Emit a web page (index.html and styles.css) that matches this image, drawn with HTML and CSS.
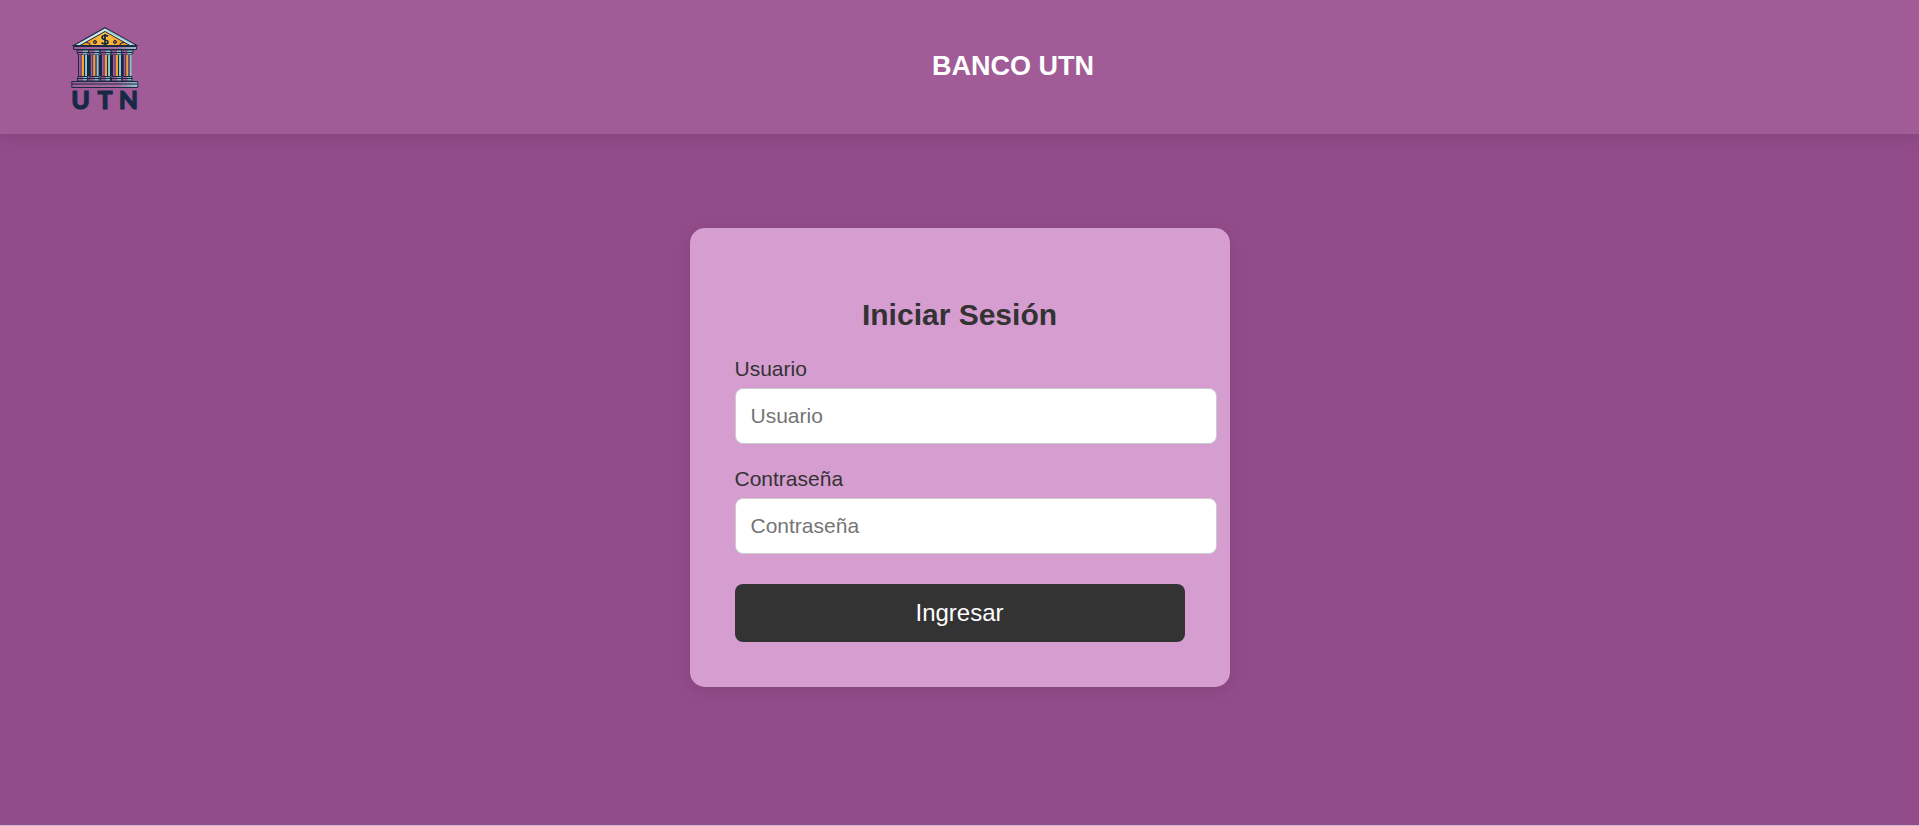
FILE: index.html
```html
<!DOCTYPE html>
<html lang="es">
<head>
<meta charset="utf-8">
<title>Banco UTN</title>
<link rel="stylesheet" href="styles.css">
</head>
<body>
<header class="header">
  <svg class="logo" viewBox="0 0 72 92" role="img" aria-label="UTN">
    <defs>
      <linearGradient id="gold" x1="0" x2="1"><stop offset="0" stop-color="#ef8d18"/><stop offset=".5" stop-color="#ffc246"/><stop offset="1" stop-color="#f18a0c"/></linearGradient>
      <linearGradient id="stone" x1="0" x2="1"><stop offset="0" stop-color="#a15c97"/><stop offset=".7" stop-color="#a66da0"/><stop offset="1" stop-color="#8fc5cc"/></linearGradient>
      <g id="column">
        <path d="M0 23h12v3l-1.500 2h-9L0 26z" fill="#a15c97"/>
        <path d="M6 23h5v5H6z" fill="#83b9c0"/>
        <path d="M0 23h11.500v2.500L10 28H1.500L0 25.500zM0 25.500h11" fill="none" stroke="#1b2945"/>
        <path d="M2 28h8v21H2z" fill="#a15c97"/>
        <path d="M4 28v21" stroke="#633e62"/>
        <path d="M6 28v21" stroke="#f3a52c" stroke-width="2"/>
        <path d="M9 28v21" stroke="#8bc5ce" stroke-width="2"/>
        <path d="M1.500 28v21M7.500 28v21" stroke="#1b2945"/>
        <path d="M1 49h10v5H0v-3z" fill="#a15c97"/>
        <path d="M6 49h5v5H6z" fill="#83b9c0"/>
        <path d="M1 49.500h9.500V54H.5v-2.500zM0 51.500h11" fill="none" stroke="#1b2945"/>
      </g>
    </defs>
    <path d="M14 28h42v21H14z" fill="#17263f"/>
    <path d="M2.500 18.500 34 .8l31.500 17.700z" fill="#d3e5e2" stroke="#1b2945" stroke-width="1.200"/>
    <path d="M9 18.500 34 4.500l25 14z" fill="url(#gold)" stroke="#1b2945"/>
    <path d="M35 2.500 63 18" stroke="#8fc5cc" stroke-width="1.200"/>
    <path d="M15 15.500c3 0 4 1 4 3M53 15.500c-3 0-4 1-4 3" fill="none" stroke="#1b2945" stroke-width="1.200"/>
    <circle cx="24" cy="15" r="1.500" fill="#8a6a3e" stroke="#1b2945"/>
    <circle cx="44" cy="15" r="1.500" fill="#8a6a3e" stroke="#1b2945"/>
    <path d="M37 9.500c-1-1.500-6-1.500-6 1 0 2.500 6 2 6 4.500 0 2.500-5 2.500-6.500.5M34 7v11" fill="none" stroke="#17263f" stroke-width="1.700"/>
    <path d="M2.500 19.500h63v3h-63z" fill="url(#stone)" stroke="#1b2945"/>
    <use href="#column" x="6"/><use href="#column" x="17.500"/><use href="#column" x="29"/><use href="#column" x="40"/><use href="#column" x="50.500"/>
    <path d="M.8 54.500h66v6h-66z" fill="url(#stone)" stroke="#1b2945"/>
    <path d="M1 57h65" stroke="#1b2945"/>
    <text class="logo-text" x="9.500" y="82">U</text>
    <text class="logo-text" x="34" y="82">T</text>
    <text class="logo-text" x="57.500" y="82">N</text>
  </svg>
  <h1 class="brand">BANCO UTN</h1>
</header>
<main class="main">
  <form class="card">
    <h2 class="title">Iniciar Sesión</h2>
    <label class="label" for="user">Usuario</label>
    <input class="field" id="user" type="text" placeholder="Usuario">
    <label class="label" for="pass">Contraseña</label>
    <input class="field" id="pass" type="password" placeholder="Contraseña">
    <button class="submit" type="submit">Ingresar</button>
  </form>
</main>
</body>
</html>
```
FILE: styles.css
```css
body {
  margin: 0;
  min-height: 100vh;
  display: flex;
  flex-direction: column;
  box-sizing: border-box;
  border-bottom: 1px solid #d3b9cf;
  background: #924c8a;
  color: #333;
  font-family: "Liberation Sans", Arial, sans-serif;
}

.header {
  display: flex;
  align-items: flex-start;
  padding: 27px 36px 15px 71px;
  background: #a15c97;
  box-shadow: 0 4px 20px rgba(0, 0, 0, 0.1);
}

.logo {
  flex: none;
  width: 72px;
  height: 92px;
}

.logo-text {
  fill: #172945;
  stroke: #172945;
  stroke-width: 1px;
  font-family: Lato, sans-serif;
  font-size: 25px;
  font-weight: 900;
  text-anchor: middle;
}

.brand {
  flex: 1;
  margin: 0;
  padding-top: 24px;
  color: #fff;
  font-size: 27px;
  line-height: 31px;
  text-align: center;
}

.main {
  flex: 1;
  display: flex;
  align-items: center;
  justify-content: center;
  padding-bottom: 45px;
}

.card {
  box-sizing: border-box;
  width: 540px;
  padding: 70px 45px 45px;
  border-radius: 15px;
  background: #d69ed0;
  box-shadow: 0 4px 20px rgba(0, 0, 0, 0.1);
}

.title {
  margin: 0 0 25px;
  font-size: 30px;
  line-height: 34px;
  text-align: center;
}

.label {
  display: block;
  margin-bottom: 7px;
  font-size: 21px;
  line-height: 24px;
}

.field {
  display: block;
  box-sizing: content-box;
  width: 100%;
  height: 24px;
  margin: 0 0 23px;
  padding: 15px;
  border: 1px solid #ccc;
  border-radius: 8px;
  background: #fff;
  color: #333;
  font: 21px "Liberation Sans", Arial, sans-serif;
}

.field::placeholder {
  color: #757575;
}

.submit {
  display: block;
  width: 100%;
  margin-top: 30px;
  padding: 15px;
  border: 0;
  border-radius: 8px;
  background: #333;
  color: #fff;
  font: 24px/28px "Liberation Sans", Arial, sans-serif;
}
```
